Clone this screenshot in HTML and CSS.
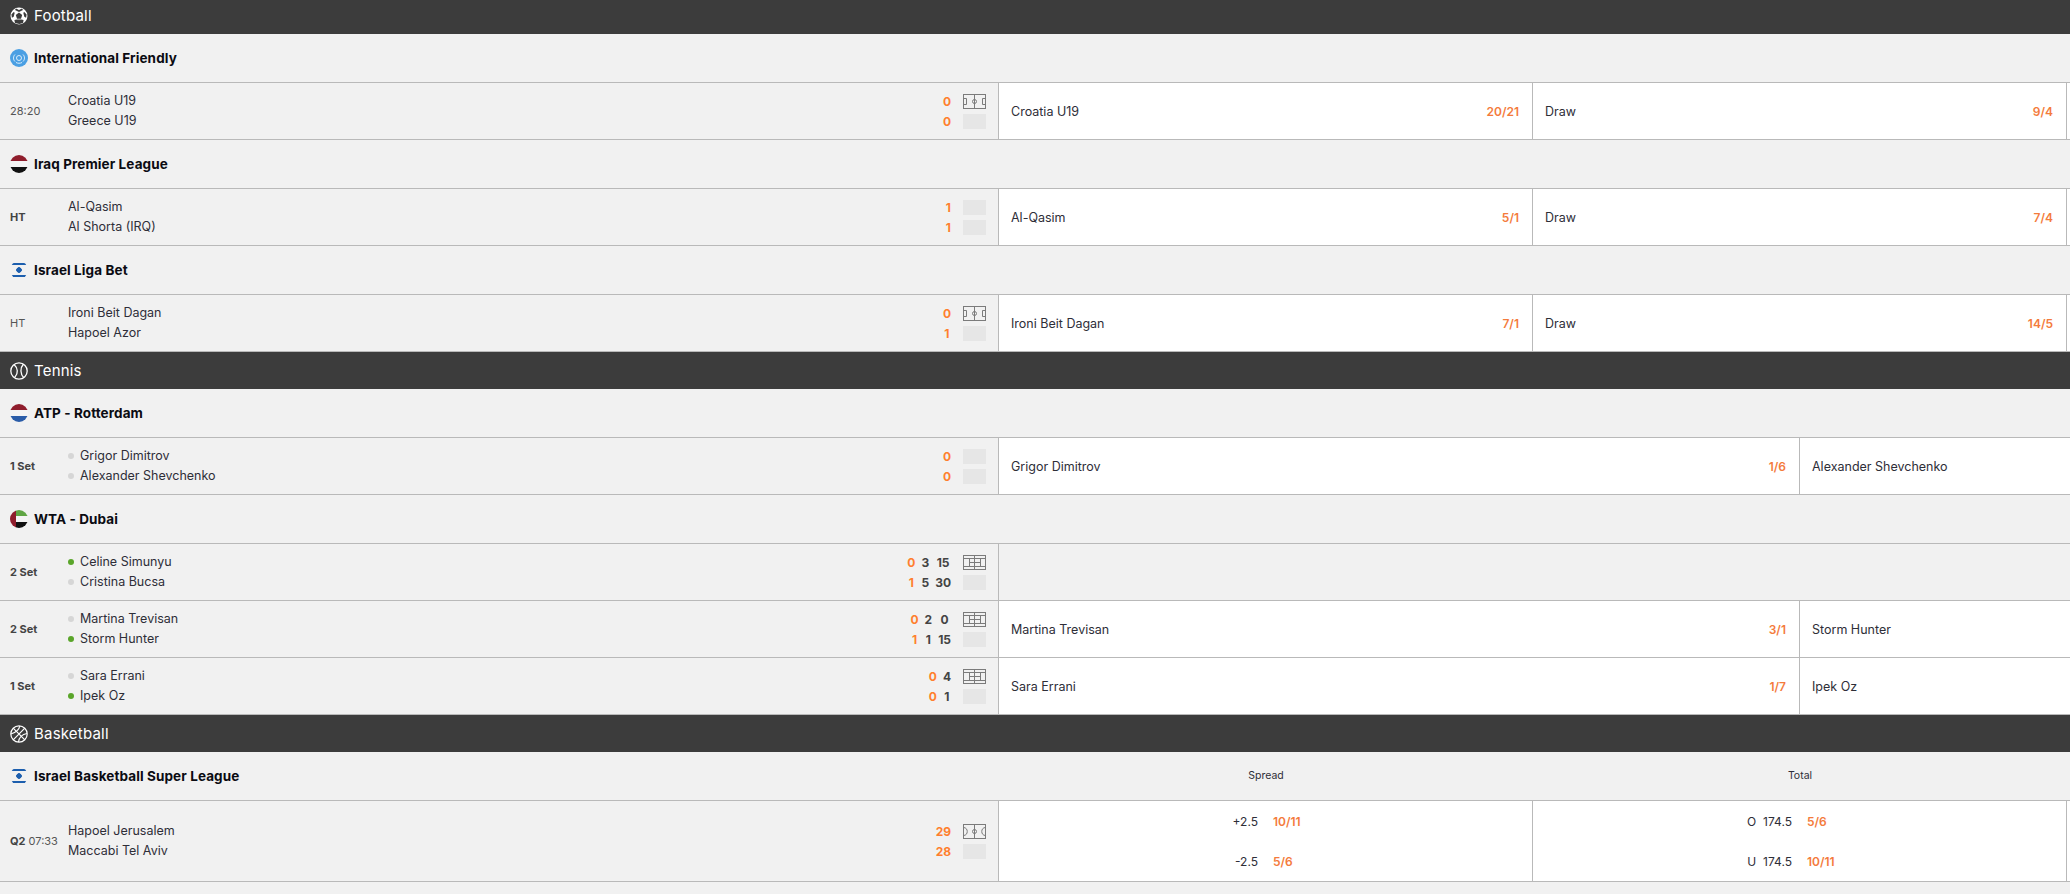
FILE: index.html
```html
<!DOCTYPE html>
<html lang="en">
<head>
<meta charset="utf-8">
<title>Live betting</title>
<link rel="stylesheet" href="styles.css">
</head>
<body>
<svg class="defs" width="0" height="0" aria-hidden="true">
  <symbol id="pitch" viewBox="0 0 23 15">
    <g fill="none" stroke="#7b7b7b">
      <rect x=".5" y=".5" width="22" height="14"/>
      <path d="M11.500 .5v14M.5 4.500h3v6h-3M22.500 4.500h-3v6h3"/>
      <circle cx="11.500" cy="7.500" r="2"/>
    </g>
  </symbol>
  <symbol id="court" viewBox="0 0 23 15">
    <g fill="none" stroke="#7b7b7b">
      <rect x=".5" y=".5" width="22" height="14"/>
      <path d="M.5 3.500h22M.5 11.500h22M6.500 3.500v8M17.500 3.500v8M6.500 7.500h11M11.500 .5v14"/>
    </g>
  </symbol>
  <symbol id="hoops" viewBox="0 0 23 15">
    <g fill="none" stroke="#7b7b7b">
      <rect x=".5" y=".5" width="22" height="14"/>
      <path d="M11.500 .5v14M.5 3.500c5 0 5 8 0 8M22.500 3.500c-5 0-5 8 0 8"/>
      <circle cx="11.500" cy="7.500" r="2"/>
    </g>
  </symbol>
</svg>

<main class="page">

  <section>
    <h2 class="sport">
      <svg class="sport-icon" viewBox="0 0 18 18"><circle cx="9" cy="9" r="8.500" fill="#fff"/><path d="M9 5.600l3.200 2.300-1.200 3.800H7L5.800 7.900z" fill="#3c3c3c"/><path d="M6 1.500l3 1.400 3-1.400 1 1.600-4 1.800-4-1.800zM1.400 7.500l2.300-2.600 1 .9-1 3.900-1.800 1zM16.600 7.500l-2.300-2.600-1 .9 1 3.900 1.800 1zM5 16l-.6-3 2.300-.4h4.600l2.300.4-.6 3-3.600 1z" fill="#3c3c3c"/></svg>
      Football
    </h2>

    <div class="league">
      <div class="league-name"><span class="flag flag-world"><svg viewBox="0 0 18 18"><g fill="none" stroke="#d8ecfa"><circle cx="9" cy="9" r="2.500"/><path d="M5 5.500c-2 2-2 5 0 7M13 5.500c2 2 2 5 0 7M6 13.500c2 1 4 1 6 0"/></g></svg></span>International Friendly</div>
    </div>
    <div class="row">
      <div class="match">
        <div class="clock">28:20</div>
        <div class="teams"><div>Croatia U19</div><div>Greece U19</div></div>
        <div class="score"><b class="hi">0</b><b class="hi">0</b></div>
        <div class="boxes"><svg class="box"><use href="#pitch"/></svg><span class="box blank"></span></div>
      </div>
      <div class="odds three">
        <div class="cell"><span>Croatia U19</span><b>20/21</b></div>
        <div class="cell"><span>Draw</span><b>9/4</b></div>
        <div class="cell"></div>
      </div>
    </div>

    <div class="league">
      <div class="league-name"><span class="flag flag-iraq"></span>Iraq Premier League</div>
    </div>
    <div class="row">
      <div class="match">
        <div class="clock strong">HT</div>
        <div class="teams"><div>Al-Qasim</div><div>Al Shorta (IRQ)</div></div>
        <div class="score"><b class="hi">1</b><b class="hi">1</b></div>
        <div class="boxes"><span class="box blank"></span><span class="box blank"></span></div>
      </div>
      <div class="odds three">
        <div class="cell"><span>Al-Qasim</span><b>5/1</b></div>
        <div class="cell"><span>Draw</span><b>7/4</b></div>
        <div class="cell"></div>
      </div>
    </div>

    <div class="league">
      <div class="league-name"><span class="flag flag-israel"></span>Israel Liga Bet</div>
    </div>
    <div class="row">
      <div class="match">
        <div class="clock">HT</div>
        <div class="teams"><div>Ironi Beit Dagan</div><div>Hapoel Azor</div></div>
        <div class="score"><b class="hi">0</b><b class="hi">1</b></div>
        <div class="boxes"><svg class="box"><use href="#pitch"/></svg><span class="box blank"></span></div>
      </div>
      <div class="odds three">
        <div class="cell"><span>Ironi Beit Dagan</span><b>7/1</b></div>
        <div class="cell"><span>Draw</span><b>14/5</b></div>
        <div class="cell"></div>
      </div>
    </div>
  </section>

  <section>
    <h2 class="sport">
      <svg class="sport-icon" viewBox="0 0 18 18"><g fill="none" stroke="#fff" stroke-width="1.300"><circle cx="9" cy="9" r="8.200"/><path d="M4 2.500c4 3.500 4.500 9 .8 12.800M13.500 2c-3.500 4-3.500 10 .5 14"/></g></svg>
      Tennis
    </h2>

    <div class="league">
      <div class="league-name"><span class="flag flag-nl"></span>ATP - Rotterdam</div>
    </div>
    <div class="row">
      <div class="match">
        <div class="clock strong">1 Set</div>
        <div class="teams dotted"><div><i class="dot"></i>Grigor Dimitrov</div><div><i class="dot"></i>Alexander Shevchenko</div></div>
        <div class="score"><b class="hi">0</b><b class="hi">0</b></div>
        <div class="boxes"><span class="box blank"></span><span class="box blank"></span></div>
      </div>
      <div class="odds two">
        <div class="cell"><span>Grigor Dimitrov</span><b>1/6</b></div>
        <div class="cell"><span>Alexander Shevchenko</span></div>
      </div>
    </div>

    <div class="league">
      <div class="league-name"><span class="flag flag-uae"></span>WTA - Dubai</div>
    </div>
    <div class="row">
      <div class="match">
        <div class="clock strong">2 Set</div>
        <div class="teams dotted"><div><i class="dot on"></i>Celine Simunyu</div><div><i class="dot"></i>Cristina Bucsa</div></div>
        <div class="score sets3"><b class="hi">0</b><b>3</b><b>15</b><b class="hi">1</b><b>5</b><b>30</b></div>
        <div class="boxes"><svg class="box"><use href="#court"/></svg><span class="box blank"></span></div>
      </div>
      <div class="odds"></div>
    </div>
    <div class="row">
      <div class="match">
        <div class="clock strong">2 Set</div>
        <div class="teams dotted"><div><i class="dot"></i>Martina Trevisan</div><div><i class="dot on"></i>Storm Hunter</div></div>
        <div class="score sets3"><b class="hi">0</b><b>2</b><b>0</b><b class="hi">1</b><b>1</b><b>15</b></div>
        <div class="boxes"><svg class="box"><use href="#court"/></svg><span class="box blank"></span></div>
      </div>
      <div class="odds two">
        <div class="cell"><span>Martina Trevisan</span><b>3/1</b></div>
        <div class="cell"><span>Storm Hunter</span></div>
      </div>
    </div>
    <div class="row">
      <div class="match">
        <div class="clock strong">1 Set</div>
        <div class="teams dotted"><div><i class="dot"></i>Sara Errani</div><div><i class="dot on"></i>Ipek Oz</div></div>
        <div class="score sets2"><b class="hi">0</b><b>4</b><b class="hi">0</b><b>1</b></div>
        <div class="boxes"><svg class="box"><use href="#court"/></svg><span class="box blank"></span></div>
      </div>
      <div class="odds two">
        <div class="cell"><span>Sara Errani</span><b>1/7</b></div>
        <div class="cell"><span>Ipek Oz</span></div>
      </div>
    </div>
  </section>

  <section>
    <h2 class="sport">
      <svg class="sport-icon" viewBox="0 0 18 18"><g fill="none" stroke="#fff" stroke-width="1.200"><circle cx="9" cy="9" r="8.200"/><path d="M3.200 3.200l11.600 11.600M14.800 3.200L3.200 14.800M9.800 1c-.6 3.500-2.800 6-8.800 8M17 8.500c-5 .8-7.800 3.500-8.500 8.500"/></g></svg>
      Basketball
    </h2>

    <div class="league">
      <div class="league-name"><span class="flag flag-israel"></span>Israel Basketball Super League</div>
      <div class="market-heads"><div>Spread</div><div>Total</div><div></div></div>
    </div>
    <div class="row tall">
      <div class="match">
        <div class="clock"><strong>Q2</strong> 07:33</div>
        <div class="teams"><div>Hapoel Jerusalem</div><div>Maccabi Tel Aviv</div></div>
        <div class="score"><b class="hi">29</b><b class="hi">28</b></div>
        <div class="boxes"><svg class="box"><use href="#hoops"/></svg><span class="box blank"></span></div>
      </div>
      <div class="odds three">
        <div class="cell lines">
          <div class="line"><span>+2.5</span><b>10/11</b></div>
          <div class="line"><span>-2.5</span><b>5/6</b></div>
        </div>
        <div class="cell lines">
          <div class="line"><span><em>O</em>174.5</span><b>5/6</b></div>
          <div class="line"><span><em>U</em>174.5</span><b>10/11</b></div>
        </div>
        <div class="cell"></div>
      </div>
    </div>
  </section>

</main>
</body>
</html>
```
FILE: styles.css
```css
* { box-sizing: border-box; }

html, body {
  margin: 0;
  height: 100%;
  background: #f1f1f1;
  overflow: hidden;
}

body {
  font-family: Inter, "Open Sans", sans-serif;
  font-size: 12.5px;
  color: #2e2e38;
}

.defs { position: absolute; }

.page {
  width: 2601px;
  margin-top: -3px;
}

/* sport header */
.sport {
  display: flex;
  align-items: center;
  gap: 6px;
  height: 37px;
  margin: 0;
  padding-left: 10px;
  background: #3c3c3c;
  color: #fff;
  font-size: 15px;
  font-weight: 400;
  letter-spacing: .2px;
}

.sport-icon {
  width: 18px;
  height: 18px;
  flex: none;
}

/* league header */
.league {
  display: flex;
  align-items: center;
  height: 49px;
  padding-bottom: 1px;
  border-bottom: 1px solid #b9b9b9;
}

.league-name {
  display: flex;
  align-items: center;
  gap: 6px;
  width: 999px;
  flex: none;
  padding-left: 10px;
  color: #0b0b12;
  font-size: 13.5px;
  font-weight: 700;
  letter-spacing: .1px;
}

.market-heads {
  display: grid;
  grid-template-columns: repeat(3, 534px);
  font-size: 10.5px;
  text-align: center;
}

/* flags */
.flag {
  display: block;
  width: 18px;
  height: 18px;
  flex: none;
  border-radius: 50%;
  overflow: hidden;
}

.flag svg { display: block; }
.flag-world { background: #4a9fe3; }
.flag-iraq { background: linear-gradient(#8f1d2c 0 6px, #f4f4f4 6px 12px, #111 12px); }
.flag-nl { background: linear-gradient(#8f1d2c 0 6px, #f4f4f4 6px 12px, #2a5ca8 12px); }
.flag-uae { background: linear-gradient(90deg, #8f1d2c 0 6px, transparent 6px), linear-gradient(#5fa544 0 6px, #f4f4f4 6px 12px, #111 12px); }
.flag-israel {
  background:
    radial-gradient(circle, #1d5fae 0 2.5px, transparent 3px),
    linear-gradient(transparent 2px, #1d5fae 2px 4px, transparent 4px 14px, #1d5fae 14px 16px, transparent 16px);
}

/* match row */
.row {
  display: flex;
  height: 57px;
  border-bottom: 1px solid #b9b9b9;
}

.row.tall { height: 81px; }

.match {
  display: flex;
  align-items: center;
  width: 999px;
  flex: none;
  padding: 0 12px 0 10px;
  border-right: 1px solid #b9b9b9;
}

.clock {
  width: 58px;
  flex: none;
  color: #555;
  font-size: 11px;
}

.clock.strong, .clock strong {
  color: #444;
  font-weight: 700;
}

.teams {
  flex: 1;
  line-height: 20px;
}

.dot {
  display: inline-block;
  width: 6px;
  height: 6px;
  margin-right: 6px;
  border-radius: 50%;
  background: #d6d6d6;
  vertical-align: 1px;
}

.dot.on { background: #5aa52a; }

.score {
  display: grid;
  grid-template-rows: 20px 20px;
  column-gap: 6px;
  justify-items: center;
  align-items: center;
  margin-right: 12px;
  color: #444;
  font-size: 12px;
}

.score b { font-weight: 700; }
.score .hi { color: #ff7f2e; }

.sets3 { grid-template-columns: auto auto auto; }
.sets2 { grid-template-columns: auto auto; }

.boxes {
  display: flex;
  flex-direction: column;
  gap: 5px;
  width: 23px;
  flex: none;
}

.box {
  display: block;
  width: 23px;
  height: 15px;
}

.box.blank { background: #e6e6e6; }

/* odds */
.odds {
  display: grid;
  flex: 0 0 1602px;
}

.odds.three { grid-template-columns: repeat(3, 534px); }
.odds.two { grid-template-columns: repeat(2, 801px); }

.cell {
  display: flex;
  align-items: center;
  justify-content: space-between;
  padding: 0 13px 0 12px;
  background: #fff;
  border-right: 1px solid #b9b9b9;
  font-size: 12.5px;
}

.cell b, .line b {
  color: #f47b3c;
  font-size: 12px;
  font-weight: 600;
}

.cell.lines {
  display: block;
  padding: 0;
}

.line {
  display: grid;
  grid-template-columns: 1fr 1fr;
  column-gap: 15px;
  align-items: center;
  height: 40px;
  font-size: 12px;
}

.line span { text-align: right; }

.line em {
  margin-right: 7px;
  font-style: normal;
}
```
